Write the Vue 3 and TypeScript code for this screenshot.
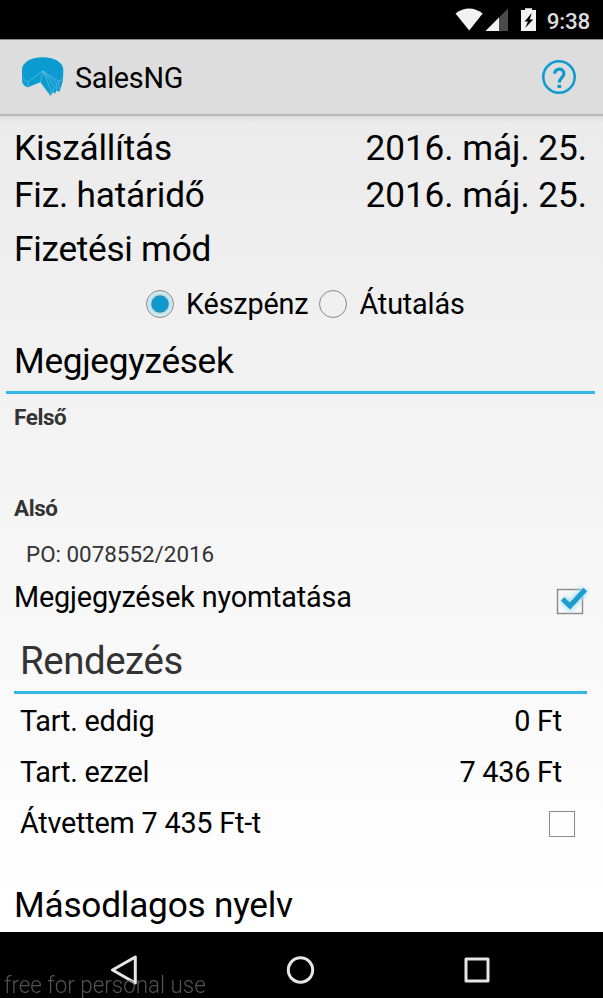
<script setup lang="ts">
import { ref } from 'vue'

const payment = ref<'cash' | 'transfer'>('cash')
const printNotes = ref(true)
const received = ref(false)
const dates = [
  { label: 'Kiszállítás', value: '2016. máj. 25.' },
  { label: 'Fiz. határidő', value: '2016. máj. 25.' },
]
const totals = [
  { label: 'Tart. eddig', value: '0 Ft' },
  { label: 'Tart. ezzel', value: '7 436 Ft' },
]
</script>

<template>
  <div class="screen">
    <div class="status">
      <svg class="status-icons" width="90" height="39" viewBox="0 0 90 39">
        <path d="M5.5 13.5Q19 3.5 32.7 13.5L19.2 30.5Z" fill="#f2f2f2" />
        <path d="M58 8.5V31H35.5Z" fill="#4a4a4a" />
        <path d="M49 17.5V31H35.5Z" fill="#f2f2f2" />
        <path d="M71 10h4V8.3h7V10h4v21H71Z" fill="#f2f2f2" />
        <path d="M81.8 13L74.5 21.5h3.4L75.2 28l8-8.4h-3.5Z" fill="#000" />
      </svg>
      <span class="clock">9:38</span>
    </div>

    <header class="bar">
      <svg class="logo" width="45" height="42" viewBox="60 80 135 126">
        <path d="M66 122C66 100 92 84 128 84S190 100 190 122L189 152L184 170L179 187L169 184L165 193L159 189L152 200L121 159L84 174C72 171 67 163 66 151Z" fill="#0a9bd1" />
        <path d="M67 141C69 151 76 157 84 158L128 125L153 181M84 158V173M128 125L121 159M128 125L162 170L159 190M128 125L169 160V184M128 125L175 155L184 153L189 142M175 155L179 185M153 181V198" fill="none" stroke="#8fcde4" stroke-width="1.5" />
      </svg>
      <h1>SalesNG</h1>
      <svg class="help" width="36" height="36" viewBox="0 0 36 36">
        <circle cx="18" cy="18" r="15.7" fill="none" stroke="#0a9bd1" stroke-width="2.5" />
        <path d="M13.7 14.8C13.7 8.6 22.9 8.6 22.9 14.4C22.9 18.4 18.3 18.8 18.3 23.6" fill="none" stroke="#0a9bd1" stroke-width="3.2" />
        <path d="M16.5 25.8h3.6v3.2h-3.6z" fill="#0a9bd1" />
      </svg>
    </header>

    <main>
      <div v-for="d in dates" :key="d.label" class="row date">
        <span class="label">{{ d.label }}</span><span>{{ d.value }}</span>
      </div>
      <div class="row mode">Fizetési mód</div>
      <div class="radios">
        <span class="option" @click="payment = 'cash'">
          <i class="radio" :class="{ on: payment === 'cash' }"></i><span>Készpénz</span>
        </span>
        <span class="option" @click="payment = 'transfer'">
          <i class="radio" :class="{ on: payment === 'transfer' }"></i><span>Átutalás</span>
        </span>
      </div>
      <h2 class="notes">Megjegyzések</h2>
      <div class="small top">Felső</div>
      <div class="small">Alsó</div>
      <div class="po">PO: 0078552/2016</div>
      <div class="print" @click="printNotes = !printNotes">
        <span>Megjegyzések nyomtatása</span>
        <svg class="check" width="42" height="40" viewBox="0 0 42 40">
          <rect x="9.5" y="12.5" width="25" height="24" fill="none" stroke="#8a8a8a" stroke-width="1.4" />
          <g v-if="printNotes" fill="none">
            <path class="glow" d="M15 22.5L22 29L37 12.5" stroke="#a9e1f5" stroke-width="8" />
            <path d="M14.5 22L22 29L37.3 12.5" stroke="#1c9dce" stroke-width="5" />
          </g>
        </svg>
      </div>
      <h2 class="order">Rendezés</h2>
      <div class="totals">
        <div v-for="t in totals" :key="t.label" class="total">
          <span>{{ t.label }}</span><span>{{ t.value }}</span>
        </div>
        <div class="total received" @click="received = !received">
          <span>Átvettem 7 435 Ft-t</span><i class="box" :class="{ on: received }"></i>
        </div>
      </div>
      <div class="row language">Másodlagos nyelv</div>
    </main>

    <nav>
      <svg width="603" height="66" viewBox="0 0 603 66" fill="none" stroke="#e6e6e6" stroke-width="3" stroke-linejoin="round">
        <path d="M112.5 38L135.3 25V51Z" />
        <circle cx="300.5" cy="38" r="12.2" />
        <rect x="466" y="27" width="22" height="22" />
      </svg>
      <span class="watermark">free for personal use</span>
    </nav>
  </div>
</template>

<style>
body {
  margin: 0;
}
</style>

<style scoped>
.screen {
  width: 603px;
  height: 998px;
  display: flex;
  flex-direction: column;
  overflow: hidden;
  font-family: Roboto, 'Liberation Sans', sans-serif;
  font-size: 28.8px;
  letter-spacing: -0.16px;
  color: #000;
  background: #000;
}
h1, h2 {
  margin: 0;
  font-weight: 400;
}
.status {
  height: 39px;
  display: flex;
  justify-content: flex-end;
  padding-right: 13px;
}
.status-icons {
  margin-right: 7px;
}
.clock {
  font-size: 22.4px;
  line-height: 42px;
  font-weight: 500;
  letter-spacing: -0.2px;
  color: #dedede;
}
.bar {
  height: 77px;
  box-sizing: border-box;
  flex: none;
  display: flex;
  align-items: center;
  padding: 0 26px 0 20px;
  background: #ddd;
  border-top: 1px solid #888;
  border-bottom: 2px solid #b8b8b8;
}
h1 {
  margin-left: 10px;
  padding-top: 2px;
  font-size: 28.8px;
  line-height: 74px;
  letter-spacing: -0.3px;
}
.help {
  margin-left: auto;
}
main {
  height: 816px;
  flex: none;
  box-sizing: border-box;
  padding-top: 9px;
  background: linear-gradient(rgba(0, 0, 0, .06), transparent 7px), linear-gradient(#ebebeb, #fff 800px);
}
.row {
  display: flex;
  justify-content: space-between;
  padding: 0 16px 0 14px;
  font-size: 35.2px;
  letter-spacing: -0.06px;
}
.label {
  letter-spacing: -0.18px;
}
.date {
  line-height: 46px;
}
.date + .date {
  line-height: 48px;
}
.mode {
  line-height: 60px;
  letter-spacing: -0.26px;
}
.radios {
  display: flex;
  height: 50px;
  line-height: 50px;
  padding-left: 146px;
  gap: 11px;
}
.option {
  display: flex;
  align-items: center;
  gap: 12px;
}
.radio {
  width: 28px;
  height: 28px;
  box-sizing: border-box;
  border: 1.5px solid #888;
  border-radius: 50%;
}
.radio.on {
  background: radial-gradient(circle, #0a9bd1 7.2px, #3789a4 7.6px, #3789a4 8.2px, #a9dcee 9px, #dcebf0 12px);
}
.notes {
  height: 65px;
  box-sizing: border-box;
  margin: 0 8px 0 6px;
  padding-left: 8px;
  font-size: 35.2px;
  line-height: 64px;
  letter-spacing: -0.3px;
  border-bottom: 3px solid #33b5e5;
}
.small {
  padding-left: 14px;
  font-size: 22.4px;
  line-height: 47px;
  font-weight: 700;
  letter-spacing: -0.38px;
  color: #333;
}
.small.top {
  margin-bottom: 44px;
}
.po {
  padding-left: 26px;
  font-size: 22.4px;
  line-height: 45px;
  letter-spacing: 0;
  color: #333;
}
.print {
  display: flex;
  justify-content: space-between;
  height: 40px;
  line-height: 40px;
  padding: 0 13px 0 14px;
}
.glow {
  filter: blur(2px);
}
.order {
  height: 77px;
  box-sizing: border-box;
  margin: 0 16px 0 14px;
  padding-left: 6px;
  font-size: 38.4px;
  line-height: 87px;
  letter-spacing: -0.42px;
  color: #333;
  border-bottom: 3px solid #33b5e5;
}
.totals {
  padding: 2px 41px 30px 20px;
  letter-spacing: -0.22px;
}
.total {
  display: flex;
  justify-content: space-between;
  align-items: center;
  line-height: 51px;
}
.received {
  margin-right: -13px;
}
.box {
  width: 26px;
  height: 26px;
  box-sizing: border-box;
  border: 1.5px solid #8a8a8a;
}
.box.on {
  background: #1c9dce;
}
.language {
  line-height: 53px;
  letter-spacing: -0.22px;
}
nav {
  position: relative;
  height: 66px;
  flex: none;
}
nav svg {
  display: block;
}
.watermark {
  position: absolute;
  left: 4px;
  top: 40px;
  font-size: 24.6px;
  line-height: 26px;
  font-weight: 300;
  letter-spacing: 0;
  white-space: nowrap;
  transform: scaleX(.91);
  transform-origin: left;
  color: rgba(110, 110, 110, .75);
}
</style>
